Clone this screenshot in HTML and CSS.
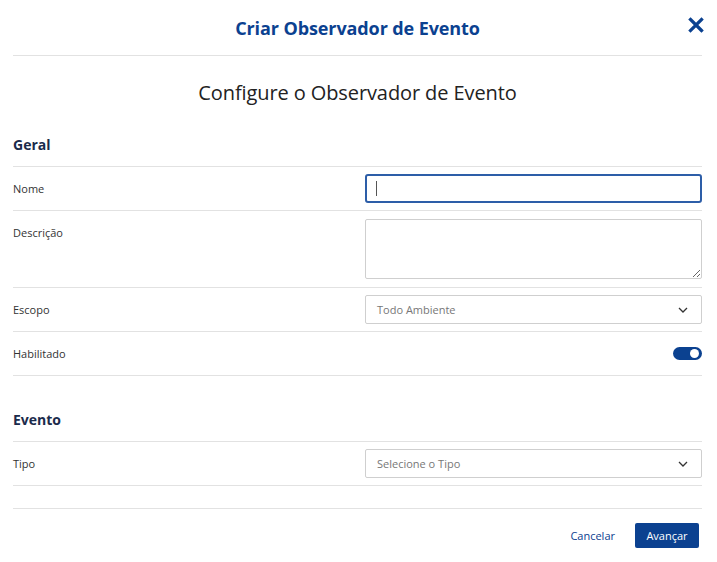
FILE: index.html
```html
<!DOCTYPE html>
<html lang="pt" dir="ltr">
  <head>
    <meta charset="utf-8">
    <link rel="stylesheet" href="styles.css">
    <title>Criar Observador de Evento</title>
  </head>
  <body>
    <div class="modal">
      <div class="modal-header">
        <h2>Criar Observador de Evento</h2>
        <button class="close" type="button">
          <svg width="16" height="16" viewBox="0 0 16 16"><path d="M2.5 2.5 L13.5 13.5 M13.5 2.5 L2.5 13.5" stroke="#0b4190" stroke-width="3.2" stroke-linecap="square"/></svg>
        </button>
      </div>
      <h1 class="subtitle">Configure o Observador de Evento</h1>

      <h3 class="section-title">Geral</h3>
      <div class="row">
        <label>Nome</label>
        <div class="field"><input class="input focused" type="text"><span class="caret"></span></div>
      </div>
      <div class="row tall">
        <label>Descrição</label>
        <div class="field"><textarea class="input area"></textarea></div>
      </div>
      <div class="row">
        <label>Escopo</label>
        <div class="field">
          <div class="select">Todo Ambiente
            <svg width="10" height="6" viewBox="0 0 10 6"><path d="M1 1 L5 5 L9 1" fill="none" stroke="#333" stroke-width="1.3"/></svg>
          </div>
        </div>
      </div>
      <div class="row">
        <label>Habilitado</label>
        <div class="field right"><span class="toggle"><span class="knob"></span></span></div>
      </div>

      <h3 class="section-title second">Evento</h3>
      <div class="row">
        <label>Tipo</label>
        <div class="field">
          <div class="select">Selecione o Tipo
            <svg width="10" height="6" viewBox="0 0 10 6"><path d="M1 1 L5 5 L9 1" fill="none" stroke="#333" stroke-width="1.3"/></svg>
          </div>
        </div>
      </div>

      <div class="footer">
        <a href="#" class="cancel">Cancelar</a>
        <button class="primary" type="button">Avançar</button>
      </div>
    </div>
  </body>
</html>
```

FILE: styles.css
```css
body {
  margin: 0;
  font-family: "Open Sans", sans-serif;
  color: #333;
  background: #fff;
}
.modal {
  width: 689px;
  margin-left: 13px;
}
.modal-header {
  height: 55px;
  border-bottom: 1px solid #e2e2e2;
  display: flex;
  align-items: center;
  justify-content: center;
  position: relative;
}
.modal-header h2 {
  margin: 0;
  font-size: 18px;
  font-weight: 700;
  color: #0b4190;
  letter-spacing: -0.1px;
}
.close {
  position: absolute;
  right: -2px;
  top: 17px;
  border: 0;
  background: none;
  padding: 0;
  width: 16px;
  height: 16px;
}
.subtitle {
  margin: 0;
  padding: 23px 0 0;
  height: 53px;
  text-align: center;
  font-size: 20px;
  font-weight: 400;
  color: #222;
  letter-spacing: -0.1px;
}
.section-title {
  margin: 0;
  height: 35px;
  border-bottom: 1px solid #e2e2e2;
  font-size: 14px;
  font-weight: 700;
  color: #1b2b4b;
  line-height: 20px;
  padding-top: 3px;
  box-sizing: border-box;
}
.section-title.second {
  margin-top: 0;
  height: 66px;
  padding-top: 34px;
}
.row {
  display: flex;
  align-items: center;
  height: 44px;
  border-bottom: 1px solid #e2e2e2;
  box-sizing: border-box;
}
.row.tall {
  height: 77px;
  align-items: flex-start;
}
.row.tall label {
  padding-top: 14px;
}
.row label {
  width: 352px;
  font-size: 11px;
  color: #333;
}
.field {
  flex: 1;
  position: relative;
}
.field.right {
  display: flex;
  justify-content: flex-end;
}
.input {
  display: block;
  width: 100%;
  height: 29px;
  box-sizing: border-box;
  border: 1px solid #cfcfcf;
  border-radius: 2px;
  font-family: inherit;
  font-size: 11px;
  outline: none;
}
.input.focused {
  border: 2px solid #2d5ea8;
  border-radius: 3px;
}
.caret {
  position: absolute;
  left: 11px;
  top: 7px;
  width: 1px;
  height: 15px;
  background: #555;
}
.input.area {
  height: 60px;
  margin-top: 8px;
  resize: vertical;
}
.select {
  height: 29px;
  box-sizing: border-box;
  border: 1px solid #cfcfcf;
  border-radius: 2px;
  display: flex;
  align-items: center;
  justify-content: space-between;
  padding: 0 13px 0 11px;
  font-size: 11px;
  color: #777;
}
.toggle {
  width: 29px;
  height: 13px;
  border-radius: 7px;
  background: #0b4190;
  position: relative;
  display: block;
}
.knob {
  position: absolute;
  right: 3px;
  top: 2px;
  width: 9px;
  height: 9px;
  border-radius: 50%;
  background: #fff;
}
.footer {
  margin-top: 22px;
  border-top: 1px solid #e2e2e2;
  height: 53px;
  display: flex;
  align-items: flex-start;
  justify-content: flex-end;
  gap: 20px;
  padding-right: 3px;
  padding-top: 14px;
  box-sizing: border-box;
}
.cancel {
  font-size: 11px;
  color: #0b4190;
  text-decoration: none;
  line-height: 25px;
}
.primary {
  width: 64px;
  height: 25px;
  border: 0;
  border-radius: 2px;
  background: #0b4190;
  color: #fff;
  font-family: inherit;
  font-size: 11px;
  padding: 0;
}
```
